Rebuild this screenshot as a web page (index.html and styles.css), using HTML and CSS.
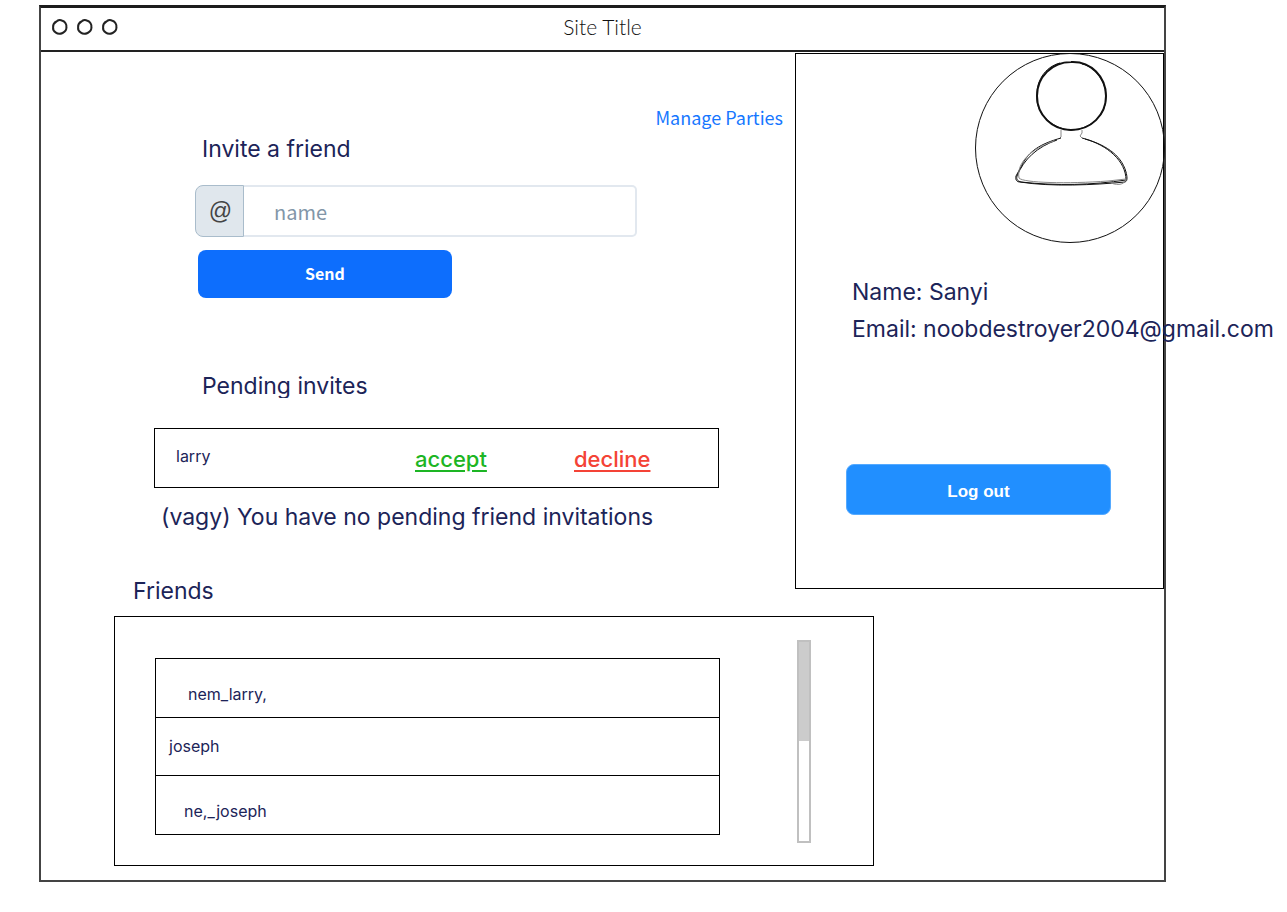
FILE: index.html
```html
<!DOCTYPE html>
<html lang="en">
<head>
<meta charset="utf-8">
<title>Site Title</title>
<link rel="stylesheet" href="styles.css">
</head>
<body>
<div class="window">
  <header class="titlebar">
    <svg class="dots" width="70" height="20" viewBox="0 0 70 20" aria-hidden="true">
      <g id="dot"><path d="M3.600 7C4.600 5.200 5.800 4.300 7.300 3.900C8.500 3 11 3 12.500 3.800C15 4.600 16.800 7.500 16.400 10.200C16.600 12.500 14.600 15 12.600 16C10.500 17 7.500 16.900 5.900 15.600C4 14.500 2.800 12.500 3.100 10.300C2.900 8.300 3.900 6.300 5.700 5.200L8 3.200"/></g>
      <use href="#dot" x="25"/><use href="#dot" x="50"/>
    </svg>
    <h1 class="site-title">Site Title</h1>
  </header>
  <div class="content">
    <main class="social">
      <a class="manage" href="#">Manage Parties</a>
      <form class="invite">
        <h2 class="heading"><label for="friend">Invite a friend</label></h2>
        <div class="field">
          <span class="at">@</span>
          <input class="field-input" id="friend" type="text" placeholder="name">
        </div>
        <button class="send" type="button">Send</button>
      </form>
      <section class="pending">
        <h2 class="heading clipped">Pending invites</h2>
        <div class="request">
          <span class="request-name">larry</span>
          <a class="action accept" href="#">accept</a>
          <a class="action decline" href="#">decline</a>
        </div>
        <p class="empty">(vagy) You have no pending friend invitations</p>
      </section>
    </main>
    <aside class="profile">
      <svg class="avatar" width="190" height="190" viewBox="0 0 190 190" role="img" aria-label="Avatar">
        <circle class="line" cx="95" cy="95" r="94.500"/>
        <path class="bold" d="M96 9C116 8 131 24 131 43C131 62 116 77 96 77C77 77 62 62 62 43C62 24 77 9 96 9Z"/>
        <path class="line" d="M85 10C70 14 60 28 62 48C64 64 80 76 96 77C118 76 132 60 131 42C130 26 118 13 107 11"/>
        <path class="faint" d="M86 77V84L84 86M107 77V80L105 83L107 85"/>
        <path class="line" d="M86 85C65 91 54 98 47 112L41 123C40 127 42 129 45 129C76 134 119 132 150 129C153 128 152 123 151 119C146 101 129 91 107 85"/>
        <path class="line" d="M82 87C62 94 49 106 42 123C41 127 43 128 46 129C82 133 118 132 151 127C151 108 132 92 110 86"/>
        <path class="faint" d="M79 88C58 95 41 109 44 125C48 130 93 131 133 128L151 126C150 131 144 133 136 130"/>
      </svg>
      <div class="details">
        <p class="detail">Name: Sanyi</p>
        <p class="detail">Email: noobdestroyer2004@gmail.com</p>
      </div>
      <button class="logout" type="button">Log out</button>
    </aside>
  </div>
  <section class="friends">
    <h2 class="friends-heading">Friends</h2>
    <div class="friends-box">
      <ul class="friend-list">
        <li class="friend low deep">nem_larry,</li>
        <li class="friend">joseph</li>
        <li class="friend low">ne,_joseph</li>
      </ul>
      <div class="scrollbar"><div class="thumb"></div></div>
    </div>
  </section>
</div>
</body>
</html>
```

FILE: styles.css
```css
* { box-sizing: border-box; }
body {
  margin: 0;
  padding: 5px 121px 30px 39px;
  background: #fff;
  color: #1c2458;
  font-family: Inter, sans-serif;
  font-size: 23px;
}
h1, h2, p, ul { margin: 0; padding: 0; font-weight: 400; }
.window { border: 2px solid #444; border-top: 3px solid #1c1c1c; padding-bottom: 14px; }
.titlebar {
  display: grid;
  grid-template-columns: 1fr auto 1fr;
  align-items: center;
  height: 44px;
  padding-bottom: 4px;
  border-bottom: 2px solid #222;
}
.dots { margin-left: 9px; fill: none; stroke: #222; stroke-width: 2; }
.site-title { color: #111; font-family: Lato, sans-serif; font-weight: 300; font-size: 21px; line-height: 24px; }
.content { display: flex; align-items: flex-start; padding-top: 1px; }
.social { flex: 1; min-width: 0; display: flex; flex-direction: column; padding-top: 50px; }
.manage {
  align-self: flex-end;
  margin-right: 12px;
  color: #1677ff;
  font-family: "Noto Sans CJK SC", sans-serif;
  font-size: 18px;
  line-height: 28px;
  text-decoration: none;
}
.invite { margin-left: 154px; padding-top: 2px; }
.heading { margin-left: 7px; font-size: 23px; line-height: 32px; }
.field { display: flex; max-width: 442px; height: 52px; margin-top: 20px; }
.at {
  display: grid;
  place-items: center;
  width: 49px;
  padding-left: 2px;
  border: 1px solid #a9bccb;
  border-radius: 8px 0 0 8px;
  background: #e0e7ed;
  color: #444;
  font-family: "Liberation Sans", sans-serif;
}
.field-input {
  flex: 1;
  min-width: 0;
  border: 2px solid #e2e8ef;
  border-left: 0;
  border-radius: 0 5px 5px 0;
  padding: 0 30px;
  font-family: "Noto Sans CJK SC", sans-serif;
  font-size: 20px;
}
.field-input::placeholder { color: #8296a8; opacity: 1; }
.send, .logout { display: block; border: 0; color: #fff; font-weight: 700; }
.send {
  width: 254px;
  height: 48px;
  margin: 13px 0 0 3px;
  padding-bottom: 4px;
  border-radius: 8px;
  background: #0d6efd;
  font-family: "Noto Sans CJK SC", sans-serif;
  font-size: 16px;
}
.pending { margin: 72px 76px 0 113px; }
.clipped { margin-left: 48px; height: 28px; overflow: hidden; }
.request {
  display: grid;
  grid-template-columns: 239px 159px 1fr;
  align-items: center;
  height: 60px;
  margin-top: 30px;
  padding-left: 21px;
  border: 1px solid #000;
}
.request-name { padding-bottom: 4px; font-size: 16px; }
.action { padding-top: 2px; font-size: 22px; font-weight: 500; text-decoration-thickness: 2px; text-underline-offset: 3px; }
.accept { color: #1db524; }
.decline { color: #f44336; }
.empty { margin: 13px 0 0 7px; line-height: 32px; white-space: nowrap; }
.profile {
  display: flex;
  flex-direction: column;
  width: 369px;
  padding-bottom: 73px;
  border: 1px solid #000;
}
.avatar { align-self: flex-end; margin: -1px -2px 0 0; fill: none; stroke: #111; overflow: visible; }
.line { stroke-width: 1; }
.bold { stroke-width: 2; }
.faint { stroke-width: 1; stroke: #888; }
.details { margin: 31px 0 0 56px; }
.detail { line-height: 37px; white-space: nowrap; }
.logout {
  width: 265px;
  height: 51px;
  margin: 116px 0 0 50px;
  padding-top: 6px;
  border: 1px solid #55aaff;
  border-radius: 8px;
  background: #218fff;
  font-family: "Liberation Sans", sans-serif;
  font-size: 17px;
}
.friends { max-width: 833px; margin-top: -12px; padding-left: 73px; }
.friends-heading { margin: 0 0 11px 19px; font-size: 23px; line-height: 28px; }
.friends-box { display: flex; height: 250px; padding: 23px 62px 22px 40px; border: 1px solid #000; }
.friend-list { flex: 1; align-self: flex-start; margin: 18px 77px 0 0; border: 1px solid #000; list-style: none; }
.friend {
  display: flex;
  align-items: center;
  height: 58px;
  padding: 0 0 2px 13px;
  border-bottom: 1px solid #000;
  font-size: 16px;
}
.friend:first-child { height: 59px; }
.friend:last-child { border-bottom: 0; }
.low { padding: 12px 0 0 28px; }
.deep { padding-left: 32px; }
.scrollbar { width: 14px; height: 203px; border: 2px solid #c0c0c0; }
.thumb { height: 99px; background: #ccc; }
```
